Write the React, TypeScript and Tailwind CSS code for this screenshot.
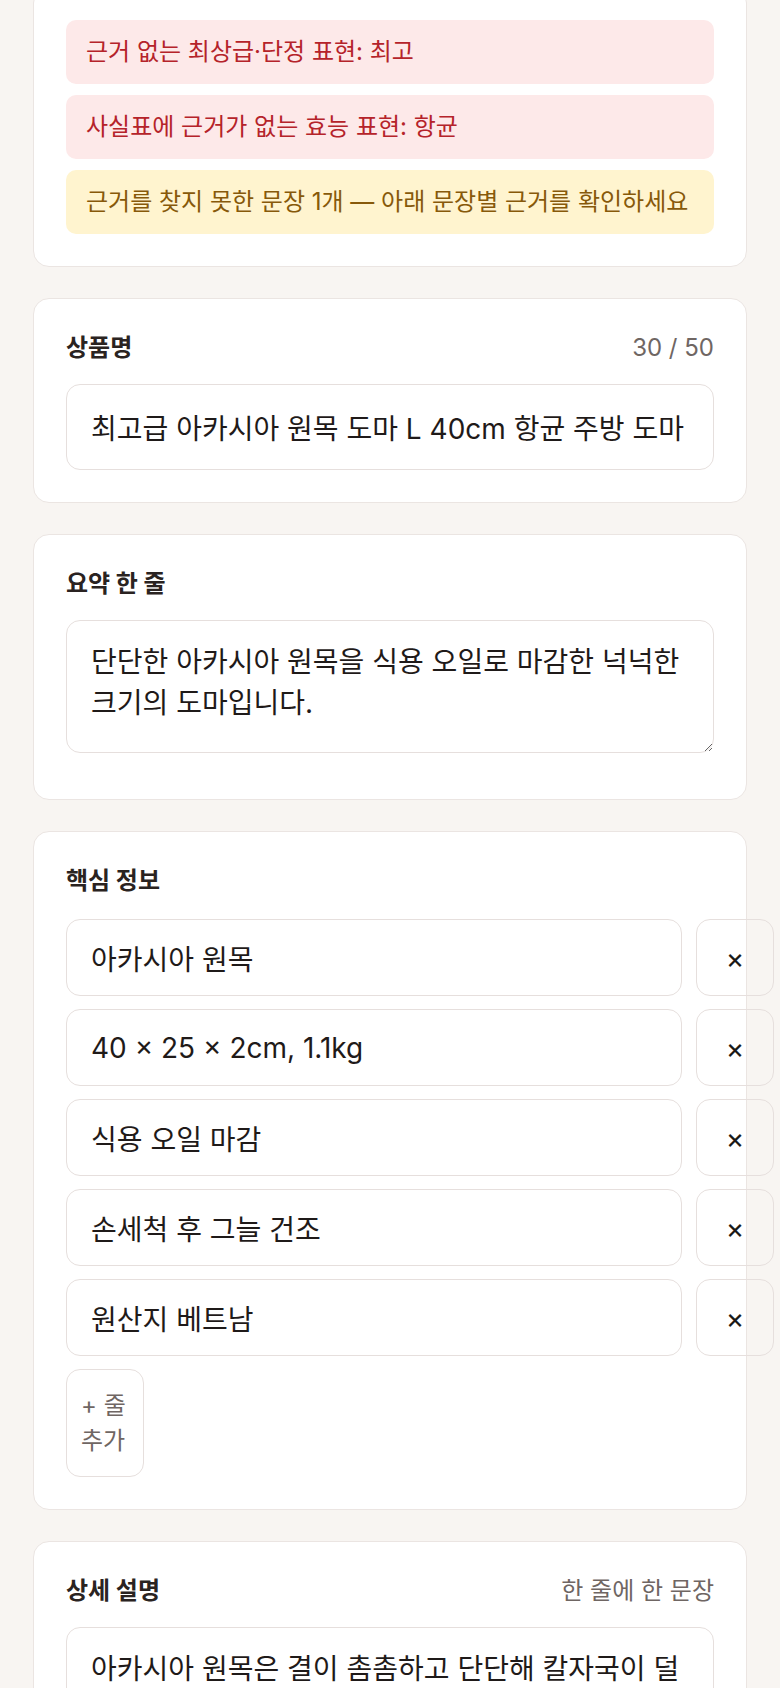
import { useState } from 'react';

const alerts = [
  { tone: 'red', text: '근거 없는 최상급·단정 표현: 최고' },
  { tone: 'red', text: '사실표에 근거가 없는 효능 표현: 항균' },
  { tone: 'amber', text: '근거를 찾지 못한 문장 1개 — 아래 문장별 근거를 확인하세요' },
];

const initialFacts = [
  '아카시아 원목',
  '40 × 25 × 2cm, 1.1kg',
  '식용 오일 마감',
  '손세척 후 그늘 건조',
  '원산지 베트남',
];

const Card = ({ children, className = '' }: { children: React.ReactNode; className?: string }) => (
  <section className={`rounded-[16px] border border-[#ebe5e2] bg-white p-8 ${className}`}>{children}</section>
);

const Label = ({ title, hint, className = 'mb-5' }: { title: string; hint?: string; className?: string }) => (
  <div className={`flex h-[33px] items-center justify-between ${className}`}>
    <span className="text-[24px] font-bold text-[#2a2321]">{title}</span>
    {hint && <span className="text-[24px] text-[#6f6663]">{hint}</span>}
  </div>
);

export default function App() {
  const [name, setName] = useState('최고급 아카시아 원목 도마 L 40cm 항균 주방 도마');
  const [summary, setSummary] = useState('단단한 아카시아 원목을 식용 오일로 마감한 넉넉한 크기의 도마입니다.');
  const [facts, setFacts] = useState(initialFacts);
  const [detail, setDetail] = useState(
    '아카시아 원목은 결이 촘촘하고 단단해 칼자국이 덜 남습니다.\n식용 오일로 마감해 원목 본연의 색을 살렸습니다.\n40 × 25cm의 넉넉한 크기로 여러 재료를 한 번에 손질할 수 있습니다.'
  );

  return (
    <div className="min-h-screen bg-[#f8f5f2] px-[33px] pb-10 font-['Inter','Noto_Sans_CJK_KR',sans-serif] text-[#1f1a19]">
      <div className="flex flex-col gap-[31px]">
        {/* 검수 경고 */}
        <Card className="-mt-[13px]">
          <div className="flex flex-col gap-[11px]">
            {alerts.map((a) => (
              <div
                key={a.text}
                className={
                  a.tone === 'red'
                    ? 'rounded-[10px] bg-[#fde9e9] px-5 py-4 text-[24px] leading-[32px] text-[#b5232a]'
                    : 'rounded-[10px] bg-[#fff4cf] px-5 py-4 text-[24px] leading-[32px] text-[#87590a]'
                }
              >
                {a.text}
              </div>
            ))}
          </div>
        </Card>

        <Card>
          <Label title="상품명" hint={`${name.length} / 50`} />
          <input
            value={name}
            onChange={(e) => setName(e.target.value)}
            className="h-[86px] w-full rounded-[14px] border border-[#e6dfdd] px-6 text-[28px] outline-none"
          />
        </Card>

        <Card className="pb-[46px]">
          <Label title="요약 한 줄" />
          <textarea
            value={summary}
            onChange={(e) => setSummary(e.target.value)}
            className="block h-[133px] w-full rounded-[14px] border border-[#e6dfdd] px-6 py-[21px] text-[28px] leading-[41px] outline-none"
          />
        </Card>

        <Card>
          <Label title="핵심 정보" className="mb-[22px]" />
          <div className="flex flex-col gap-[13px]">
            {facts.map((f, i) => (
              <div key={i} className="flex gap-[14px]">
                <input
                  value={f}
                  onChange={(e) => setFacts(facts.map((x, j) => (j === i ? e.target.value : x)))}
                  className="h-[77px] w-[616px] shrink-0 rounded-[14px] border border-[#e6dfdd] px-6 text-[28px] outline-none"
                />
                <button
                  onClick={() => setFacts(facts.filter((_, j) => j !== i))}
                  className="h-[77px] w-[78px] shrink-0 rounded-[14px] border border-[#e6dfdd] text-[28px] text-[#1c1917]"
                >
                  ×
                </button>
              </div>
            ))}
            <div>
              <button
                onClick={() => setFacts([...facts, ''])}
                className="w-[78px] rounded-[14px] border border-[#e6dfdd] px-[14px] py-[18px] text-left text-[24px] leading-[35px] text-[#6f6663]"
              >
                + 줄 추가
              </button>
            </div>
          </div>
        </Card>

        <Card>
          <Label title="상세 설명" hint="한 줄에 한 문장" />
          <textarea
            value={detail}
            onChange={(e) => setDetail(e.target.value)}
            className="block h-[300px] w-full rounded-[14px] border border-[#e6dfdd] px-6 py-[21px] text-[28px] leading-[41px] outline-none"
          />
        </Card>
      </div>
    </div>
  );
}
